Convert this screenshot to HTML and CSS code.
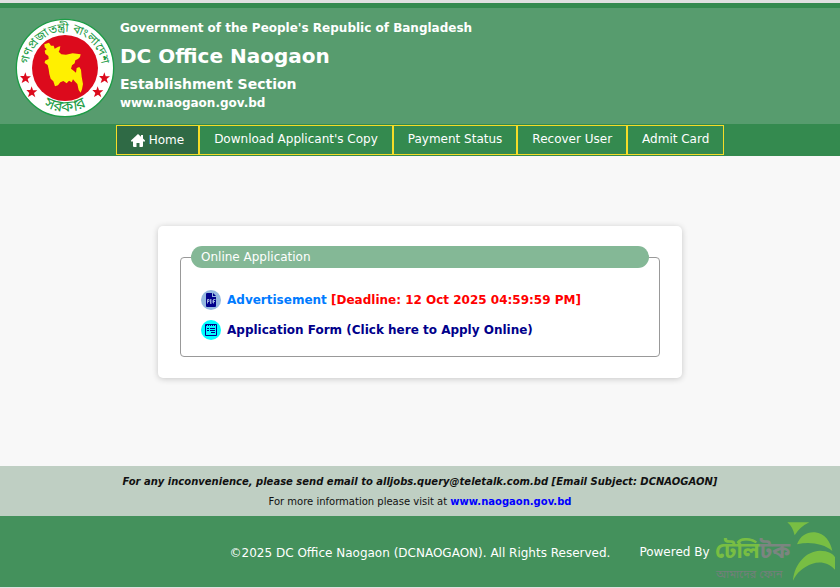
FILE: index.html
```html
<!DOCTYPE html>
<html lang="en">
<head>
    <meta charset="UTF-8">
    <meta name="viewport" content="width=device-width, initial-scale=1.0">
    <title>DC Office Naogaon</title>
    <link rel="stylesheet" href="styles.css">
</head>
<body>

    <header class="header">
        <svg class="seal" viewBox="45 54 300 300" aria-hidden="true">
            <defs>
                <path id="arc-top" d="M99 259A110 110 0 1 1 291 259" />
                <path id="arc-bottom" d="M85 275A131 131 0 0 0 305 275" />
            </defs>
            <circle cx="195" cy="204" r="146" fill="#fff" stroke="#1c9c45" stroke-width="4" />
            <circle cx="195" cy="204" r="99" fill="#dc0a1c" />
            <path fill="#fff000" d="M133 133L147 128L153 137L161 137L164 146L175 140L181 139L179 149L176 155L184 163L198 164L218 160L242 163L240 171L234 177L226 181L224 190L216 196L213 206L221 212L228 218L230 204L238 201L243 209L245 230L249 252L246 268L242 278L236 270L232 252L224 244L219 238L215 247L207 242L200 250L190 243L181 247L174 256L165 259L160 244L152 236L148 222L146 208L143 195L134 189L135 182L146 177L145 168L136 161L134 152L140 148L134 142z" />
            <g fill="#dc0a1c">
                <path id="star" d="M76 217l4 12 13 0-10 8 4 13-10-8-12 7 4-12-9-9 12 0z" />
                <use href="#star" x="19" y="42" />
                <use href="#star" x="237" y="0" />
                <use href="#star" x="217" y="42" />
            </g>
            <g class="seal-text">
                <text><textPath href="#arc-top" startOffset="50%">গণপ্রজাতন্ত্রী বাংলাদেশ</textPath></text>
                <text class="seal-bottom"><textPath href="#arc-bottom" startOffset="50%">সরকার</textPath></text>
            </g>
        </svg>
        <div class="titles">
            <p class="line">Government of the People's Republic of Bangladesh</p>
            <h1>DC Office Naogaon</h1>
            <h2>Establishment Section</h2>
            <p class="line">www.naogaon.gov.bd</p>
        </div>
    </header>

    <nav class="nav">
        <a href="#" class="active">
            <svg class="home-icon" viewBox="0 0 14 13" aria-hidden="true"><path fill="#fff" d="M7 0L0 6.500V7.500H2V12Q2 13 3 13H5.500V9H8.500V13H11Q12 13 12 12V7.500H14V6.500L12 4.600V1H10V2.800z" /></svg>Home</a>
        <a href="#">Download Applicant's Copy</a>
        <a href="#">Payment Status</a>
        <a href="#">Recover User</a>
        <a href="#">Admit Card</a>
    </nav>

    <main class="main">
        <div class="card">
            <fieldset>
                <legend>Online Application</legend>
                <a href="#" class="item advert">
                    <svg class="item-icon" viewBox="0 0 20 20" aria-hidden="true">
                        <circle cx="10" cy="10" r="10" fill="#96b9e0" />
                        <path fill="#00008b" d="M5 4Q5 3 6 3H11V7H15V16Q15 17 14 17H6Q5 17 5 16z" />
                        <path fill="#00008b" d="M12 3l3 3h-3z" />
                        <path fill="none" stroke="#c3d5ee" stroke-width=".8" d="M6.500 13.500v-4h1.500v2H6.500M9.500 9.500v4h.7l.8-1v-2l-.8-1zM12.500 13.500v-4h2M12.500 11.500h1.500" />
                    </svg>
                    <span>Advertisement <span class="deadline">[Deadline: 12 Oct 2025 04:59:59 PM]</span></span>
                </a>
                <a href="#" class="item">
                    <svg class="item-icon" viewBox="0 0 20 20" aria-hidden="true">
                        <circle cx="10" cy="10" r="10" fill="#00ffff" />
                        <path fill="none" stroke="#00008b" d="M4.500 4.500h11v11h-11zM6 8.500h2M9 8.500h5M6 10.500h2M9 10.500h5M10 12.500h4" />
                        <path fill="none" stroke="#00008b" stroke-dasharray="1 1" d="M5 5.500h10" />
                    </svg>
                    <span>Application Form (Click here to Apply Online)</span>
                </a>
            </fieldset>
        </div>
    </main>

    <section class="notice">
        <p class="help">For any inconvenience, please send email to alljobs.query@teletalk.com.bd [Email Subject: DCNAOGAON]</p>
        <p>For more information please visit at <a href="#">www.naogaon.gov.bd</a></p>
    </section>

    <footer class="footer">
        <p class="copyright">©2025 DC Office Naogaon (DCNAOGAON). All Rights Reserved.</p>
        <div class="powered">
            <span>Powered By</span>
            <svg class="teletalk" viewBox="45 30 360 189" role="img" aria-label="Teletalk">
                <text class="brand" x="45" y="144"><tspan fill="#78be43">টেলি</tspan><tspan fill="#7b8580">টক</tspan></text>
                <text class="slogan" x="48" y="203">আমাদের ফোন</text>
                <g fill="#78be43">
                    <path d="M262 37H328Q300 50 284 76Q278 50 262 37z" />
                    <path d="M291 103C301 76 322 65 345 67C374 71 391 93 397 123C370 101 330 94 291 103z" />
                    <path d="M279 212C283 160 320 123 360 122C384 122 400 131 405 142V179C386 158 361 153 337 161C309 171 291 187 279 212z" />
                </g>
            </svg>
        </div>
    </footer>

</body>
</html>
```

FILE: styles.css
```css
* {
    box-sizing: border-box;
}
html {
    background: #e0e0e0;
}
body {
    margin: 3px 0 1px;
    min-height: calc(100vh - 4px);
    display: flex;
    flex-direction: column;
    background: #f8f8f8;
    font-family: Verdana, "DejaVu Sans", sans-serif;
    font-size: 12px;
}
p, h1, h2 {
    margin: 0;
}
a {
    text-decoration: none;
}

.header {
    display: flex;
    align-items: flex-start;
    gap: 5px;
    padding: 10px 15px 6px;
    border-top: 5px solid #348a4f;
    background: #579c6e;
    color: #fff;
}
.seal {
    width: 100px;
    height: 100px;
}
.seal-text {
    font-family: "Noto Sans Bengali", "Noto Sans", sans-serif;
    font-size: 36px;
    fill: #1c9c45;
    text-anchor: middle;
}
.seal-bottom {
    font-size: 46px;
}
.line {
    font-weight: bold;
    line-height: 20px;
}
.titles h1 {
    font-size: 20px;
    line-height: 37px;
}
.titles h2 {
    font-size: 14px;
    line-height: 18px;
}

.nav {
    display: flex;
    justify-content: center;
    padding: 1px;
    background: #348a4f;
}
.nav a {
    height: 30px;
    padding: 0 14px;
    border: 1px solid #f5dc28;
    color: #fff;
    line-height: 26px;
}
.nav .active {
    display: flex;
    align-items: center;
    gap: 4px;
    background: #2f6a45;
}
.home-icon {
    width: 14px;
    height: 13px;
}

.main {
    flex: 1;
    padding: 70px 20px;
}
.card {
    max-width: 524px;
    margin: 0 auto;
    padding: 20px 22px 21px;
    border-radius: 5px;
    background: #fff;
    box-shadow: 0 1px 6px rgba(0, 0, 0, 0.2);
}
fieldset {
    margin: 0;
    padding: 17px 10px 11px;
    border: 1px solid #999;
    border-radius: 4px;
}
legend {
    width: 100%;
    padding: 0 10px;
    border-radius: 11px;
    background: #84b896;
    color: #fff;
    line-height: 22px;
}
.item {
    display: flex;
    align-items: center;
    gap: 6px;
    height: 30px;
    padding-left: 10px;
    color: #00008b;
    font-weight: bold;
}
.item-icon {
    width: 20px;
    height: 20px;
}
.advert {
    color: #007bff;
}
.deadline {
    color: #f00;
}

.notice {
    padding: 6px 5px 4px;
    background: #bfcfc3;
    color: #111;
    font-size: 10px;
    line-height: 20px;
    text-align: center;
}
.help {
    font-style: italic;
    font-weight: bold;
}
.notice a {
    color: #00f;
    font-weight: bold;
}

.footer {
    display: grid;
    grid-template-columns: 1fr auto 1fr;
    height: 71px;
    background: #44915c;
    color: #fff;
}
.copyright {
    grid-column: 2;
    padding-top: 28px;
    line-height: 18px;
}
.powered {
    display: flex;
    align-items: center;
    gap: 5px;
    padding-left: 29px;
}
.teletalk {
    width: 120px;
    height: 63px;
    flex: none;
    overflow: visible;
}
.brand, .slogan {
    font-family: "Noto Sans Bengali", "Noto Sans", sans-serif;
}
.brand {
    font-size: 67px;
    font-weight: bold;
}
.slogan {
    font-size: 34px;
    fill: #72807a;
}
```
